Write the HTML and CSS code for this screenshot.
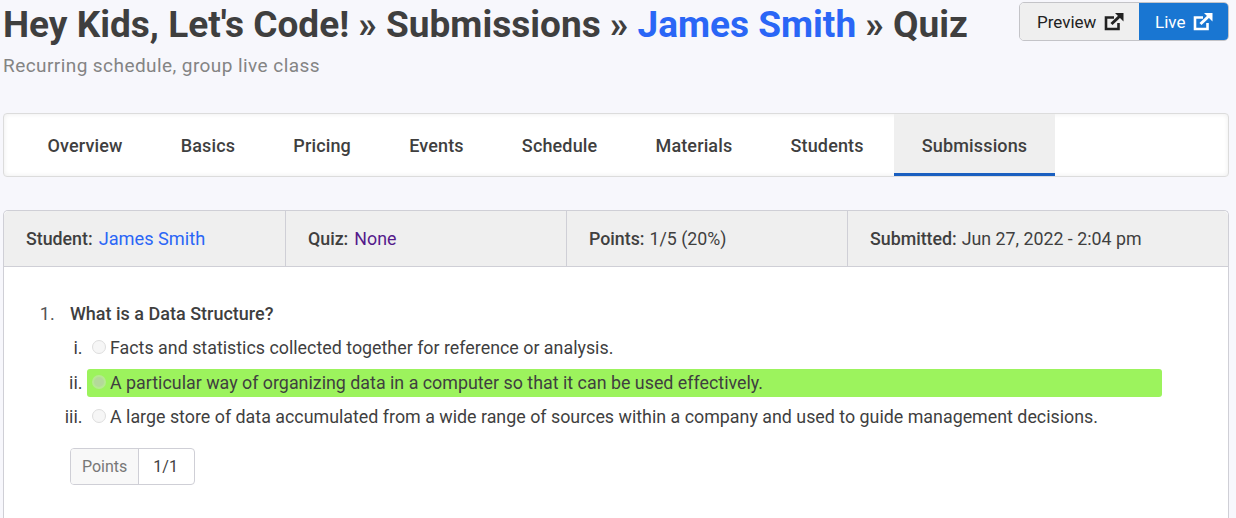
FILE: index.html
```html
<!DOCTYPE html>
<html lang="en">
<head>
<meta charset="utf-8">
<title>Quiz submission</title>
<link rel="stylesheet" href="styles.css">
</head>
<body>
<header class="page-head">
  <div>
    <h1 class="title">Hey Kids, Let's Code! » Submissions » <a class="title-link" href="#">James Smith</a> » Quiz</h1>
    <p class="subtitle">Recurring schedule, group live class</p>
  </div>
  <div class="btn-group">
    <a class="btn btn-light" href="#">Preview
      <svg class="ext" viewBox="0 0 20 18"><path d="M14.5 10v6H2V4.5h8" fill="none" stroke="currentColor" stroke-width="2.6"/><path d="M7.5 11L17.5 1.5" fill="none" stroke="currentColor" stroke-width="3"/><path d="M11 0h8.5v8.5z" fill="currentColor"/></svg>
    </a>
    <a class="btn btn-blue" href="#">Live
      <svg class="ext" viewBox="0 0 20 18"><path d="M14.5 10v6H2V4.5h8" fill="none" stroke="currentColor" stroke-width="2.6"/><path d="M7.5 11L17.5 1.5" fill="none" stroke="currentColor" stroke-width="3"/><path d="M11 0h8.5v8.5z" fill="currentColor"/></svg>
    </a>
  </div>
</header>

<nav class="tabs">
  <a class="tab" href="#">Overview</a>
  <a class="tab" href="#">Basics</a>
  <a class="tab" href="#">Pricing</a>
  <a class="tab" href="#">Events</a>
  <a class="tab" href="#">Schedule</a>
  <a class="tab" href="#">Materials</a>
  <a class="tab" href="#">Students</a>
  <a class="tab tab-active" href="#">Submissions</a>
</nav>

<section class="card">
  <div class="meta">
    <div class="meta-cell"><b class="label">Student:</b> <a class="link-blue" href="#">James Smith</a></div>
    <div class="meta-cell"><b class="label">Quiz:</b> <a class="link-visited" href="#">None</a></div>
    <div class="meta-cell"><b class="label">Points:</b> 1/5 (20%)</div>
    <div class="meta-cell"><b class="label">Submitted:</b> Jun 27, 2022 - 2:04 pm</div>
  </div>
  <div class="card-body">
    <ol class="questions">
      <li class="question">
        <div class="q-text">What is a Data Structure?</div>
        <ol class="answers">
          <li class="answer"><span class="answer-line"><span class="radio"></span>Facts and statistics collected together for reference or analysis.</span></li>
          <li class="answer"><span class="answer-line answer-right"><span class="radio radio-on"></span>A particular way of organizing data in a computer so that it can be used effectively.</span></li>
          <li class="answer"><span class="answer-line"><span class="radio"></span>A large store of data accumulated from a wide range of sources within a company and used to guide management decisions.</span></li>
        </ol>
        <div class="points"><span class="points-label">Points</span><span class="points-value">1/1</span></div>
      </li>
    </ol>
  </div>
</section>
</body>
</html>
```

FILE: styles.css
```css
* { box-sizing: border-box; }
html, body { height: 518px; overflow: hidden; }
body {
  margin: 0;
  padding: 0 7px 0 3px;
  background: #f7f7fc;
  color: #3f3f3f;
  font-family: Roboto, "Noto Sans", sans-serif;
  font-size: 18px;
}
a { text-decoration: none; }
.page-head { display: flex; justify-content: space-between; align-items: flex-start; height: 113px; }
.title { margin: 4px 0 0; font-size: 37px; line-height: 42px; font-weight: 700; color: #3f3f3f; white-space: nowrap; }
.title-link { color: #2a66f6; font-weight: 700; }
.subtitle { margin: 8px 0 0; font-size: 19px; letter-spacing: .43px; line-height: 24px; color: #848484; }
.btn-group { display: flex; flex: none; margin-top: 2px; height: 39px; border: 1px solid #c4c4c8; border-radius: 5px; overflow: hidden; font-size: 17px; }
.btn { display: flex; align-items: center; gap: 8px; padding-top: 1px; }
.btn-light { width: 119px; padding-left: 17px; background: #efefef; color: #222; }
.btn-blue { width: 89px; padding-left: 16px; background: #1976d2; color: #fff; }
.ext { width: 20px; height: 18px; }
.tabs { display: flex; height: 64px; padding-left: 16px; background: #fff; border: 1px solid #dcdcdc; border-radius: 4px; box-shadow: inset 0 0 5px rgba(0,0,0,.08); }
.tab { display: flex; align-items: center; padding: 0 27.5px; color: #3f3f3f; font-weight: 500; letter-spacing: .14px; white-space: nowrap; margin-right: 3.2px; }
.tab-active { background: #efefef; border-bottom: 3px solid #1a5fc0; padding-top: 3px; }
.card { margin-top: 33px; height: 308px; background: #fff; border: 1px solid #cfcfd6; border-bottom: 0; border-radius: 5px 5px 0 0; }
.meta { display: grid; grid-template-columns: 282px 281px 281px 1fr; height: 56px; background: #efefef; border-bottom: 1px solid #cfcfd6; border-radius: 5px 5px 0 0; font-size: 17.8px; }
.meta-cell { display: flex; align-items: center; gap: 5px; padding-left: 22px; border-right: 1px solid #cfcfd6; }
.meta-cell:last-child { border-right: 0; }
.label { font-weight: 500; }
.link-blue { color: #2a66f6; font-size: 18.2px; margin-left: 1px; }
.link-visited { color: #551a8b; margin-left: 1px; }
.card-body { padding: 36px 0 0 36px; }
.questions { margin: 0; padding: 0 0 0 30px; }
.question::marker { content: "1.\2002\2004"; color: #555; }
.q-text { font-weight: 500; line-height: 22px; }
.answers { list-style: lower-roman; margin: 0; padding: 9px 0 0 17px; }
.answer { height: 34.5px; }
.answer-line { display: block; width: 1075px; height: 28px; line-height: 28px; border-radius: 3px; white-space: nowrap; font-size: 17.85px; }
.answer-right { background: #9cf35d; }
.radio { display: inline-block; vertical-align: 0; width: 14px; height: 14px; margin: 0 4px 0 5px; border-radius: 50%; border: 1px solid #dedede; background: #f6f6f6; }
.radio-on { background: #b4d99a; border: 2px solid #b6e892; }
.points { display: inline-flex; height: 37px; margin-top: 10px; border: 1px solid #cfcfd6; border-radius: 4px; overflow: hidden; }
.points-label { display: flex; align-items: center; padding: 0 11px; background: #f8f8f8; border-right: 1px solid #cfcfd6; color: #777; font-size: 16px; }
.points-value { display: flex; align-items: center; padding: 0 16px 0 14px; font-size: 16px; }
```
